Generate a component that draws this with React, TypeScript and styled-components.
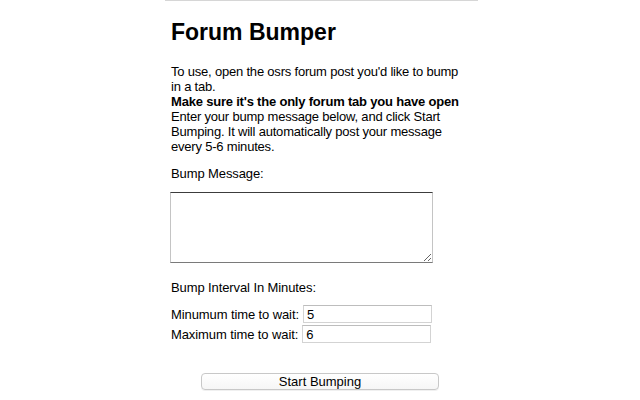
import React, { useState } from "react";
import styled, { createGlobalStyle } from "styled-components";

const GlobalStyle = createGlobalStyle`
  body {
    margin: 0;
    background: #ffffff;
    font-family: "Liberation Sans", Arial, Helvetica, sans-serif;
    color: #000000;
  }
`;

const Panel = styled.div`
  width: 313px;
  margin-left: 165px;
  padding: 0 0 0 5px;
  box-sizing: border-box;
  border-top: 1px solid #d6d6d6;
  min-height: 399px;
`;

const Title = styled.h1`
  margin: 18px 0 0 1px;
  font-size: 23px;
  line-height: 26px;
  font-weight: bold;
`;

const Intro = styled.p`
  margin: 19px 0 0 1px;
  font-size: 13px;
  line-height: 15px;
  letter-spacing: -0.2px;
  white-space: nowrap;
`;

const Label = styled.div<{ $gap: number }>`
  margin: ${(p) => p.$gap}px 0 0 1px;
  font-size: 13px;
  line-height: 15px;
  letter-spacing: -0.1px;
`;

const MessageBox = styled.textarea`
  display: block;
  box-sizing: border-box;
  width: 263px;
  height: 71px;
  margin: 11px 0 0 0;
  padding: 2px;
  border-top: 1px solid #3c3c3c;
  border-left: 1px solid #c4c4c4;
  border-right: 1px solid #c4c4c4;
  border-bottom: 1px solid #7a7a7a;
  font-family: "Liberation Sans", Arial, sans-serif;
  font-size: 13px;
  outline: none;
`;

const Rows = styled.div`
  margin-top: 10px;
  display: flex;
  flex-direction: column;
  gap: 2px;
`;

const Row = styled.label`
  display: flex;
  align-items: center;
  gap: 4px;
  padding-left: 1px;
  font-size: 13px;
  line-height: 15px;
  letter-spacing: -0.1px;
`;

const NumberInput = styled.input`
  box-sizing: border-box;
  width: 129px;
  height: 18px;
  margin: 0;
  padding: 0 3px;
  border: 1px solid #d3d3d3;
  border-top-color: #bdbdbd;
  font-family: "Liberation Sans", Arial, sans-serif;
  font-size: 13px;
  color: #000;
  outline: none;
`;

const StartButton = styled.button`
  display: block;
  box-sizing: border-box;
  width: 238px;
  height: 17px;
  margin: 30px 0 0 31px;
  padding: 0;
  border: 1px solid #c8c8c8;
  border-radius: 4px;
  background: linear-gradient(#ffffff, #f6f6f6);
  box-shadow: 0 1px 0 rgba(0, 0, 0, 0.06);
  font-family: "Liberation Sans", Arial, sans-serif;
  font-size: 13px;
  line-height: 15px;
  color: #000;
`;

export default function App() {
  const [message, setMessage] = useState("");
  const [min, setMin] = useState("5");
  const [max, setMax] = useState("6");

  return (
    <>
      <GlobalStyle />
      <Panel>
        <Title>Forum Bumper</Title>
        <Intro>
          To use, open the osrs forum post you'd like to bump
          <br />
          in a tab.
          <br />
          <b>Make sure it's the only forum tab you have open</b>
          <br />
          Enter your bump message below, and click Start
          <br />
          Bumping. It will automatically post your message
          <br />
          every 5-6 minutes.
        </Intro>

        <Label $gap={12}>Bump Message:</Label>
        <MessageBox value={message} onChange={(e) => setMessage(e.target.value)} />

        <Label $gap={17}>Bump Interval In Minutes:</Label>
        <Rows>
          <Row>
            Minumum time to wait:
            <NumberInput value={min} onChange={(e) => setMin(e.target.value)} />
          </Row>
          <Row>
            Maximum time to wait:
            <NumberInput value={max} onChange={(e) => setMax(e.target.value)} />
          </Row>
        </Rows>

        <StartButton>Start Bumping</StartButton>
      </Panel>
    </>
  );
}
